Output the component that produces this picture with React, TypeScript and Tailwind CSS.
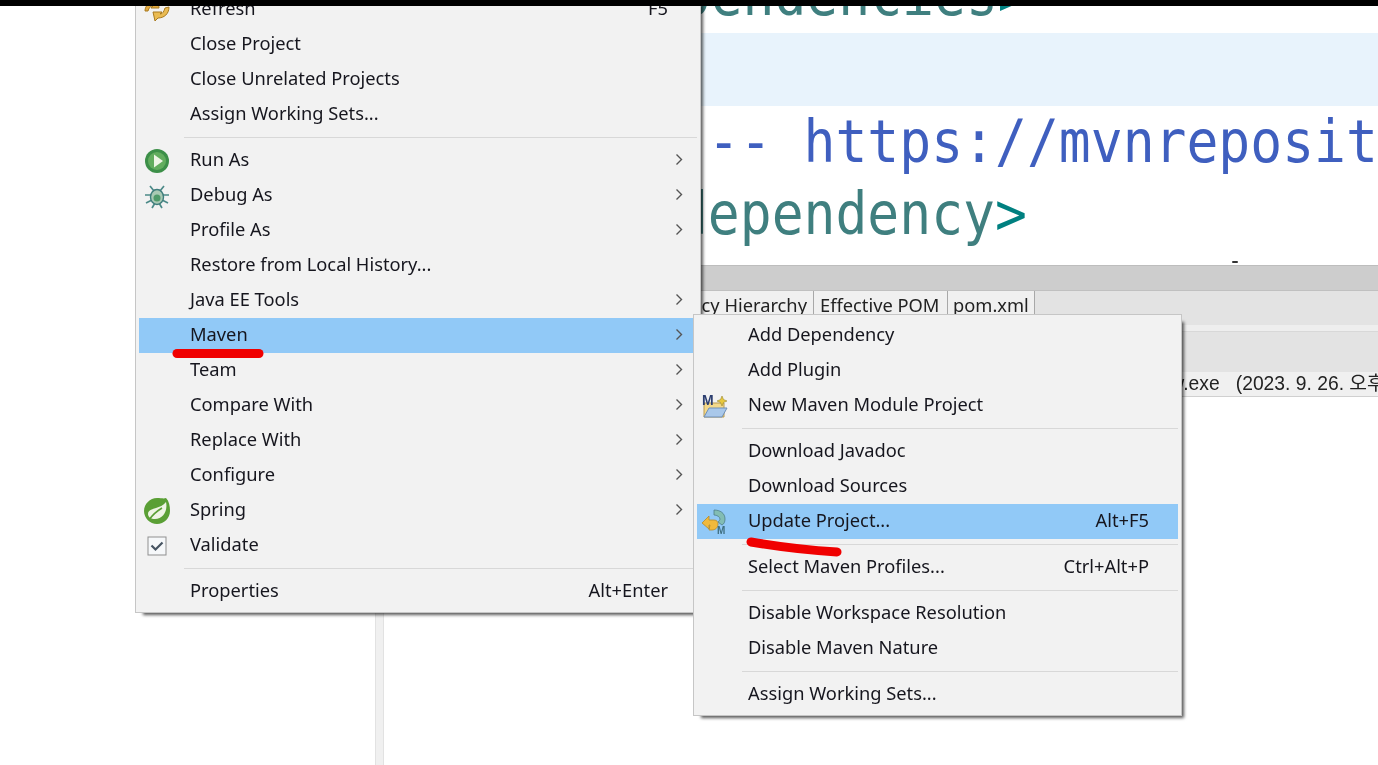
import React from "react";

const ui = { fontFamily: '"Noto Sans","Noto Sans CJK KR",sans-serif' };
const mono = { fontFamily: '"DejaVu Sans Mono",monospace' };

const Run = () => (
  <svg width="26" height="26" viewBox="0 0 26 26">
    <circle cx="13" cy="13" r="12" fill="#3c8f48" />
    <circle cx="13" cy="13" r="9" fill="#62ad5e" />
    <path d="M10 6.5l9 6.5-9 6.5z" fill="#eef5e6" />
  </svg>
);
const Bug = () => (
  <svg width="26" height="26" viewBox="0 0 26 26" fill="none">
    <path d="M6 3l4 5M20 3l-4 5M1 12h6M19 12h6M2 20l6-3M24 20l-6-3M8 25l3-5M18 25l-3-5" stroke="#4c8a88" strokeWidth="1.7" />
    <ellipse cx="13" cy="14" rx="6.5" ry="7.5" fill="#a9c9b4" stroke="#3f7d7c" strokeWidth="1.4" />
    <circle cx="13" cy="15" r="3.5" fill="#4f9a6a" />
  </svg>
);
const Spring = () => (
  <svg width="28" height="28" viewBox="0 0 28 28">
    <path d="M14 1c4 0 7 1 9 0 3 3 4 8 4 13 0 7-6 13-13 13S1 21 1 14 7 1 14 1z" fill="#5a9f35" />
    <path d="M23 5c2 9-3 17-11 17-4 0-7-2-7-5 0-7 12-4 18-12z" fill="#eef4e4" />
    <path d="M6 23c4-6 8-9 13-12" stroke="#5a9f35" strokeWidth="1.5" fill="none" />
  </svg>
);
const Check = () => (
  <svg width="20" height="20" viewBox="0 0 20 20" fill="none">
    <rect x="1" y="1" width="18" height="18" fill="#f6f8fa" stroke="#8f8f8f" />
    <path d="M4.5 9.5l4 4 7-7" stroke="#475462" strokeWidth="2.2" />
  </svg>
);
const Refresh = () => (
  <svg width="26" height="26" viewBox="0 0 26 26" fill="none">
    <path d="M1 14c0-6 5-9 10-9l3-3 1 9-8 0 2-2c-3 0-4 2-5 5z" fill="#e2a93e" stroke="#a87a20" />
    <path d="M25 10c0 7-5 11-11 11l-3 3-2-9h9l-2 2c3 0 4-3 5-6z" fill="#eabb52" stroke="#a87a20" />
  </svg>
);
const NewModule = () => (
  <svg width="28" height="26" viewBox="0 0 28 26">
    <path d="M3 10h20v14H3z" fill="#f4d98a" stroke="#b79a50" />
    <path d="M3 24l5-9h18l-5 9z" fill="#a9c8ea" stroke="#6f8fb8" />
    <text x="1" y="12" fontSize="14" fontWeight="700" fill="#2c3e70" style={{ fontFamily: '"Liberation Sans",sans-serif' }}>M</text>
    <path d="M21 3l1.5 3.5L26 8l-3.5 1.5L21 13l-1.5-3.5L16 8l3.5-1.5z" fill="#e8c83c" stroke="#9a8a30" strokeWidth=".6" />
  </svg>
);
const Update = () => (
  <svg width="28" height="26" viewBox="0 0 28 26" fill="none">
    <path d="M13 1c6 0 11 3 11 9 0 3-1 5-3 6l-4-3c1-1 2-2 2-3 0-2-3-4-6-4z" fill="#82bdb4" stroke="#4f7f88" strokeWidth=".8" />
    <path d="M1 14l7-7v4h5c3 0 4 2 4 4 0 4-3 6-6 6H8l1-5H8v4z" fill="#f0b93c" stroke="#b58a2a" strokeWidth=".8" />
    <text x="16" y="25" fontSize="10" fontWeight="700" fill="#3f6f80" style={{ fontFamily: '"Liberation Sans",sans-serif' }}>M</text>
  </svg>
);
const Chevron = () => (
  <svg width="9" height="13" viewBox="0 0 9 13" fill="none">
    <path d="M1.5 1.5l5 5-5 5" stroke="#555" strokeWidth="1.4" />
  </svg>
);

type RowProps = { label: string; icon?: React.ReactNode; arrow?: boolean; shortcut?: string; active?: boolean };

const Row = ({ label, icon, arrow, shortcut, active }: RowProps) => (
  <div className={`flex h-[35px] items-center ${active ? "bg-[#91c9f7]" : ""}`}>
    <div className="flex w-[35px] shrink-0 items-center justify-center">{icon}</div>
    <div className="w-[16px] shrink-0" />
    <span className="flex-1 whitespace-nowrap pb-[3px]">{label}</span>
    {shortcut && <span className="whitespace-nowrap pb-[3px]">{shortcut}</span>}
    <div className="flex w-[29px] shrink-0 items-center pb-[2px] pl-[7px]">{arrow && <Chevron />}</div>
  </div>
);

const Sep = () => (
  <div className="flex h-[11px] items-center pl-[45px]">
    <div className="h-px flex-1 bg-[#d8d8d8]" />
  </div>
);

const Menu = ({ className, children }: { className: string; children: React.ReactNode }) => (
  <div
    style={ui}
    className={`absolute border border-[#c6c6c6] bg-[#f2f2f2] px-[3px] pb-[3px] text-[18.3px] leading-none text-[#16161e] shadow-[5px_5px_3px_-3px_rgba(0,0,0,0.65)] ${className}`}
  >
    {children}
  </div>
);

const CodeLine = ({ cls, children }: { cls: string; children: React.ReactNode }) => (
  <div style={mono} className={`${cls} flex items-center whitespace-nowrap text-[53px] leading-none`}>
    <span className="inline-block origin-center scale-y-[1.12]">{children}</span>
  </div>
);

export default function App() {
  return (
    <div className="flex h-[765px] w-[1378px] flex-col overflow-hidden bg-white">
      <div className="h-[6px] shrink-0 bg-black" />
      <div className="relative flex flex-1 overflow-hidden blur-[0.6px]">
        <div className="w-[375px] shrink-0" />
        <div className="w-[9px] shrink-0 border-x border-[#e2e2e2] bg-[#f0f0f0]" />
        <div className="flex min-w-0 flex-1 flex-col overflow-hidden">
          <div className="h-[259px] shrink-0 overflow-hidden">
            <div className="-mt-[46px]">
              <CodeLine cls="h-[73px] pl-[199px] pb-[4px]">
                <span className="text-[#008080]">&lt;</span>
                <span className="text-[#3f7f7f]">dependencies</span>
                <span className="text-[#008080]">&gt;</span>
              </CodeLine>
              <div className="h-[73px] bg-[#e8f3fc]" />
              <CodeLine cls="h-[74px] pl-[260px] pb-[4px]">
                <span className="text-[#3f5fbf]">&lt;!-- https://mvnrepository.com/artifact</span>
              </CodeLine>
              <CodeLine cls="h-[74px] pl-[260px] pb-[7px]">
                <span className="text-[#008080]">&lt;</span>
                <span className="text-[#3f7f7f]">dependency</span>
                <span className="text-[#008080]">&gt;</span>
              </CodeLine>
            </div>
          </div>
          <div className="h-[25px] shrink-0 border-t border-[#bdbdbd] bg-[#cdcdcd]" />
          <div className="flex h-[28px] shrink-0 items-start border-t border-[#c0c0c0] bg-[#e3e3e3] text-[18.3px] leading-none text-[#222]" style={ui}>
            <div className="h-[27px] w-[430px] shrink-0 border-r border-[#a8a8a8] bg-[#f0f0f0] pt-[5px] pr-[6px] text-right whitespace-nowrap">Dependency Hierarchy</div>
            <div className="h-[27px] w-[134px] shrink-0 border-r border-[#a8a8a8] bg-[#f0f0f0] pt-[5px] pl-[6px] whitespace-nowrap">Effective POM</div>
            <div className="h-[27px] w-[87px] shrink-0 border-r border-[#a8a8a8] bg-[#f0f0f0] pt-[5px] pl-[5px] whitespace-nowrap">pom.xml</div>
          </div>
          <div className="h-[7px] shrink-0 bg-[#e3e3e3]" />
          <div className="h-[7px] shrink-0 border-b border-[#d8d8d8] bg-[#eeeeee]" />
          <div className="h-[40px] shrink-0 bg-[#e3e3e3]" />
          <div className="flex h-[25px] shrink-0 items-center border-b border-[#d0d0d0] bg-[#f0f0f0] pl-[751px] text-[19.3px] whitespace-nowrap text-[#222]" style={{ fontFamily: '"Liberation Sans","Noto Sans CJK KR",sans-serif' }}>
            javaw.exe&nbsp;&nbsp; (2023. 9. 26. 오후 3:14:22)
          </div>
        </div>

        <div className="absolute top-[255px] left-[1232px] h-[2px] w-[6px] rounded-full bg-[#333]" />

        <Menu className="top-[-16px] left-[135px] w-[566px] pt-px">
          <Row label="Refresh" icon={<Refresh />} shortcut="F5" />
          <Row label="Close Project" />
          <Row label="Close Unrelated Projects" />
          <Row label="Assign Working Sets..." />
          <Sep />
          <Row label="Run As" icon={<Run />} arrow />
          <Row label="Debug As" icon={<Bug />} arrow />
          <Row label="Profile As" arrow />
          <Row label="Restore from Local History..." />
          <Row label="Java EE Tools" arrow />
          <Row label="Maven" arrow active />
          <Row label="Team" arrow />
          <Row label="Compare With" arrow />
          <Row label="Replace With" arrow />
          <Row label="Configure" arrow />
          <Row label="Spring" icon={<Spring />} arrow />
          <Row label="Validate" icon={<Check />} />
          <Sep />
          <Row label="Properties" shortcut="Alt+Enter" />
        </Menu>

        <Menu className="top-[308px] left-[693px] w-[489px] pt-[3px]">
          <Row label="Add Dependency" />
          <Row label="Add Plugin" />
          <Row label="New Maven Module Project" icon={<NewModule />} />
          <Sep />
          <Row label="Download Javadoc" />
          <Row label="Download Sources" />
          <Row label="Update Project..." icon={<Update />} shortcut="Alt+F5" active />
          <Sep />
          <Row label="Select Maven Profiles..." shortcut="Ctrl+Alt+P" />
          <Sep />
          <Row label="Disable Workspace Resolution" />
          <Row label="Disable Maven Nature" />
          <Sep />
          <Row label="Assign Working Sets..." />
        </Menu>

        <svg className="absolute top-[335px] left-[165px]" width="110" height="25" viewBox="0 0 110 25" fill="none">
          <path d="M12 12.5H94" stroke="#f00000" strokeWidth="9" strokeLinecap="round" />
        </svg>
        <svg className="absolute top-[525px] left-[740px]" width="110" height="30" viewBox="0 0 110 30" fill="none">
          <path d="M11 11C35 15 65 19 97 21" stroke="#f00000" strokeWidth="9" strokeLinecap="round" />
        </svg>
      </div>
    </div>
  );
}
